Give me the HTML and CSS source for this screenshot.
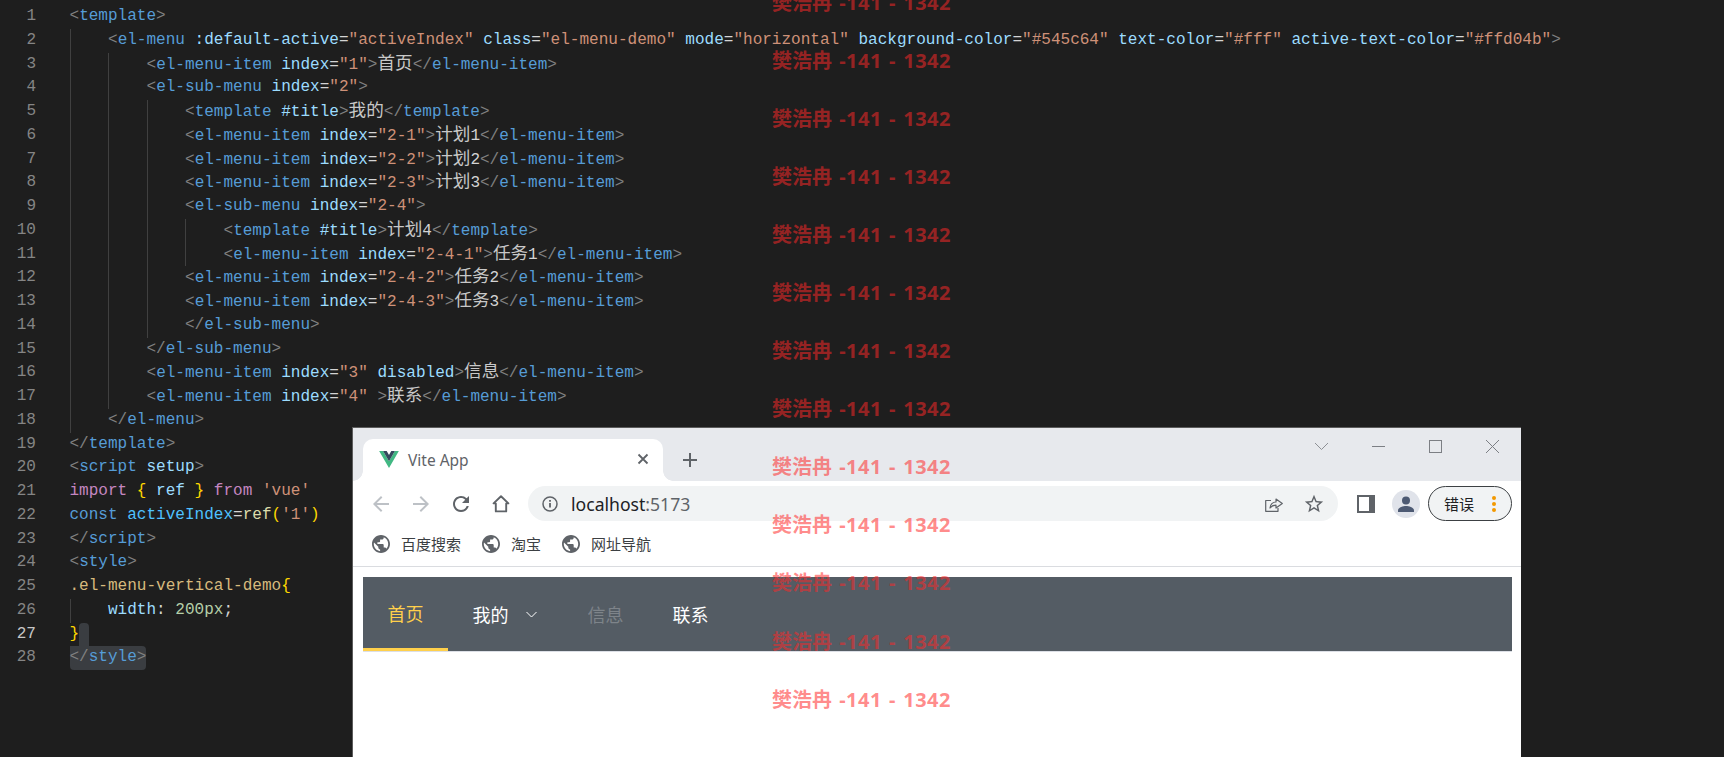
FILE: index.html
```html
<!DOCTYPE html>
<html lang="zh">
<head>
<meta charset="utf-8">
<title>Editor and Vite App</title>
<link rel="stylesheet" href="styles.css">
</head>
<body>
<main class="editor">
<div class="line"><span class="ln">1</span><span class="c"><span class="t">&lt;</span><span class="n">template</span><span class="t">&gt;</span></span></div>
<div class="line"><span class="ln">2</span><span class="g"></span><span class="c"><span class="t">&lt;</span><span class="n">el-menu</span> <span class="a">:default-active</span><span class="p">=</span><span class="s">"activeIndex"</span> <span class="a">class</span><span class="p">=</span><span class="s">"el-menu-demo"</span> <span class="a">mode</span><span class="p">=</span><span class="s">"horizontal"</span> <span class="a">background-color</span><span class="p">=</span><span class="s">"#545c64"</span> <span class="a">text-color</span><span class="p">=</span><span class="s">"#fff"</span> <span class="a">active-text-color</span><span class="p">=</span><span class="s">"#ffd04b"</span><span class="t">&gt;</span></span></div>
<div class="line"><span class="ln">3</span><span class="g"></span><span class="g"></span><span class="c"><span class="t">&lt;</span><span class="n">el-menu-item</span> <span class="a">index</span><span class="p">=</span><span class="s">"1"</span><span class="t">&gt;</span><span class="z">首页</span><span class="t">&lt;/</span><span class="n">el-menu-item</span><span class="t">&gt;</span></span></div>
<div class="line"><span class="ln">4</span><span class="g"></span><span class="g"></span><span class="c"><span class="t">&lt;</span><span class="n">el-sub-menu</span> <span class="a">index</span><span class="p">=</span><span class="s">"2"</span><span class="t">&gt;</span></span></div>
<div class="line"><span class="ln">5</span><span class="g"></span><span class="g"></span><span class="g"></span><span class="c"><span class="t">&lt;</span><span class="n">template</span> <span class="a">#title</span><span class="t">&gt;</span><span class="z">我的</span><span class="t">&lt;/</span><span class="n">template</span><span class="t">&gt;</span></span></div>
<div class="line"><span class="ln">6</span><span class="g"></span><span class="g"></span><span class="g"></span><span class="c"><span class="t">&lt;</span><span class="n">el-menu-item</span> <span class="a">index</span><span class="p">=</span><span class="s">"2-1"</span><span class="t">&gt;</span><span class="z">计划</span><span class="p">1</span><span class="t">&lt;/</span><span class="n">el-menu-item</span><span class="t">&gt;</span></span></div>
<div class="line"><span class="ln">7</span><span class="g"></span><span class="g"></span><span class="g"></span><span class="c"><span class="t">&lt;</span><span class="n">el-menu-item</span> <span class="a">index</span><span class="p">=</span><span class="s">"2-2"</span><span class="t">&gt;</span><span class="z">计划</span><span class="p">2</span><span class="t">&lt;/</span><span class="n">el-menu-item</span><span class="t">&gt;</span></span></div>
<div class="line"><span class="ln">8</span><span class="g"></span><span class="g"></span><span class="g"></span><span class="c"><span class="t">&lt;</span><span class="n">el-menu-item</span> <span class="a">index</span><span class="p">=</span><span class="s">"2-3"</span><span class="t">&gt;</span><span class="z">计划</span><span class="p">3</span><span class="t">&lt;/</span><span class="n">el-menu-item</span><span class="t">&gt;</span></span></div>
<div class="line"><span class="ln">9</span><span class="g"></span><span class="g"></span><span class="g"></span><span class="c"><span class="t">&lt;</span><span class="n">el-sub-menu</span> <span class="a">index</span><span class="p">=</span><span class="s">"2-4"</span><span class="t">&gt;</span></span></div>
<div class="line"><span class="ln">10</span><span class="g"></span><span class="g"></span><span class="g"></span><span class="g"></span><span class="c"><span class="t">&lt;</span><span class="n">template</span> <span class="a">#title</span><span class="t">&gt;</span><span class="z">计划</span><span class="p">4</span><span class="t">&lt;/</span><span class="n">template</span><span class="t">&gt;</span></span></div>
<div class="line"><span class="ln">11</span><span class="g"></span><span class="g"></span><span class="g"></span><span class="g"></span><span class="c"><span class="t">&lt;</span><span class="n">el-menu-item</span> <span class="a">index</span><span class="p">=</span><span class="s">"2-4-1"</span><span class="t">&gt;</span><span class="z">任务</span><span class="p">1</span><span class="t">&lt;/</span><span class="n">el-menu-item</span><span class="t">&gt;</span></span></div>
<div class="line"><span class="ln">12</span><span class="g"></span><span class="g"></span><span class="g"></span><span class="c"><span class="t">&lt;</span><span class="n">el-menu-item</span> <span class="a">index</span><span class="p">=</span><span class="s">"2-4-2"</span><span class="t">&gt;</span><span class="z">任务</span><span class="p">2</span><span class="t">&lt;/</span><span class="n">el-menu-item</span><span class="t">&gt;</span></span></div>
<div class="line"><span class="ln">13</span><span class="g"></span><span class="g"></span><span class="g"></span><span class="c"><span class="t">&lt;</span><span class="n">el-menu-item</span> <span class="a">index</span><span class="p">=</span><span class="s">"2-4-3"</span><span class="t">&gt;</span><span class="z">任务</span><span class="p">3</span><span class="t">&lt;/</span><span class="n">el-menu-item</span><span class="t">&gt;</span></span></div>
<div class="line"><span class="ln">14</span><span class="g"></span><span class="g"></span><span class="g"></span><span class="c"><span class="t">&lt;/</span><span class="n">el-sub-menu</span><span class="t">&gt;</span></span></div>
<div class="line"><span class="ln">15</span><span class="g"></span><span class="g"></span><span class="c"><span class="t">&lt;/</span><span class="n">el-sub-menu</span><span class="t">&gt;</span></span></div>
<div class="line"><span class="ln">16</span><span class="g"></span><span class="g"></span><span class="c"><span class="t">&lt;</span><span class="n">el-menu-item</span> <span class="a">index</span><span class="p">=</span><span class="s">"3"</span> <span class="a">disabled</span><span class="t">&gt;</span><span class="z">信息</span><span class="t">&lt;/</span><span class="n">el-menu-item</span><span class="t">&gt;</span></span></div>
<div class="line"><span class="ln">17</span><span class="g"></span><span class="g"></span><span class="c"><span class="t">&lt;</span><span class="n">el-menu-item</span> <span class="a">index</span><span class="p">=</span><span class="s">"4"</span> <span class="t">&gt;</span><span class="z">联系</span><span class="t">&lt;/</span><span class="n">el-menu-item</span><span class="t">&gt;</span></span></div>
<div class="line"><span class="ln">18</span><span class="g"></span><span class="c"><span class="t">&lt;/</span><span class="n">el-menu</span><span class="t">&gt;</span></span></div>
<div class="line"><span class="ln">19</span><span class="c"><span class="t">&lt;/</span><span class="n">template</span><span class="t">&gt;</span></span></div>
<div class="line"><span class="ln">20</span><span class="c"><span class="t">&lt;</span><span class="n">script</span> <span class="a">setup</span><span class="t">&gt;</span></span></div>
<div class="line"><span class="ln">21</span><span class="c"><span class="k">import</span> <span class="b">{</span> <span class="a">ref</span> <span class="b">}</span> <span class="k">from</span> <span class="s">'vue'</span></span></div>
<div class="line"><span class="ln">22</span><span class="c"><span class="n">const</span> <span class="v">activeIndex</span><span class="p">=</span><span class="f">ref</span><span class="b">(</span><span class="s">'1'</span><span class="b">)</span></span></div>
<div class="line"><span class="ln">23</span><span class="c"><span class="t">&lt;/</span><span class="n">script</span><span class="t">&gt;</span></span></div>
<div class="line"><span class="ln">24</span><span class="c"><span class="t">&lt;</span><span class="n">style</span><span class="t">&gt;</span></span></div>
<div class="line"><span class="ln">25</span><span class="c"><span class="y">.el-menu-vertical-demo</span><span class="b">{</span></span></div>
<div class="line"><span class="ln">26</span><span class="g"></span><span class="c"><span class="a">width</span><span class="p">:</span> <span class="m">200px</span><span class="p">;</span></span></div>
<div class="line"><span class="ln cur">27</span><span class="c"><span class="b">}</span></span><span class="sel-tail"></span></div>
<div class="line"><span class="ln">28</span><span class="c sel"><span class="t">&lt;/</span><span class="n">style</span><span class="t">&gt;</span></span></div>
</main>

<section class="win">
  <header class="titlebar">
    <div class="tab">
      <svg class="fav" viewBox="0 0 256 221" aria-hidden="true"><path fill="#41b883" d="M204.8 0H256L128 220.8 0 0h50.56L128 132.48 204.8 0z"/><path fill="#34495e" d="M50.56 0L128 133.12 204.8 0h-47.36L128 51.2 97.92 0H50.56z"/></svg>
      <span class="tab-title">Vite App</span>
      <svg class="tab-x" viewBox="0 0 12 12" aria-hidden="true"><path d="M1.500 1.500l9 9M10.500 1.500l-9 9" fill="none" stroke="#5f6368" stroke-width="1.8"/></svg>
    </div>
    <svg class="tab-plus" viewBox="0 0 16 16" aria-hidden="true"><path d="M8 1v14M1 8h14" fill="none" stroke="#5f6368" stroke-width="2"/></svg>
    <div class="winctl">
      <svg viewBox="0 0 13 13" aria-hidden="true"><path d="M0 3l6.5 6.5L13 3" fill="none" stroke="#8d9095" stroke-width="1"/></svg>
      <svg viewBox="0 0 13 13" aria-hidden="true"><path d="M0 6.5h13" fill="none" stroke="#7c7f84" stroke-width="1"/></svg>
      <svg viewBox="0 0 13 13" aria-hidden="true"><rect x=".5" y=".5" width="12" height="12" fill="none" stroke="#7c7f84" stroke-width="1"/></svg>
      <svg viewBox="0 0 13 13" aria-hidden="true"><path d="M0 0l13 13M13 0L0 13" fill="none" stroke="#7c7f84" stroke-width="1"/></svg>
    </div>
  </header>

  <div class="toolbar">
    <span class="nav"><svg viewBox="0 0 24 24" aria-hidden="true"><path class="off" d="M20 11H7.8l5.6-5.6L12 4l-8 8 8 8 1.4-1.4L7.8 13H20z"/></svg></span>
    <span class="nav"><svg viewBox="0 0 24 24" aria-hidden="true"><path class="off" d="M4 11h12.2l-5.6-5.6L12 4l8 8-8 8-1.4-1.4 5.6-5.6H4z"/></svg></span>
    <span class="nav"><svg viewBox="0 0 24 24" aria-hidden="true"><path class="on" d="M17.65 6.35A7.958 7.958 0 0 0 12 4c-4.42 0-7.99 3.58-7.99 8s3.57 8 7.99 8c3.73 0 6.84-2.55 7.73-6h-2.08A5.99 5.99 0 0 1 12 18c-3.31 0-6-2.69-6-6s2.69-6 6-6c1.66 0 3.14.69 4.22 1.78L13 11h7V4l-2.35 2.35z"/></svg></span>
    <span class="nav"><svg viewBox="0 0 24 24" aria-hidden="true"><path d="M12 4.2L4.6 11.4h2.2v8h10.4v-8h2.2z" fill="none" stroke="#5f6368" stroke-width="1.9" stroke-linejoin="round"/></svg></span>
    <div class="omni">
      <svg class="ic16" viewBox="0 0 16 16" aria-hidden="true"><circle cx="8" cy="8" r="7" fill="none" stroke="#5f6368" stroke-width="1.5"/><path d="M7.1 7h1.8v4.6H7.1zM7.1 4.1h1.8v1.7H7.1z" fill="#5f6368"/></svg>
      <span class="url">localhost<span class="port">:5173</span></span>
      <svg class="share" viewBox="0 0 18 16" aria-hidden="true"><path d="M6 4.5H.7v10.8H13V12M5 12c0-3.8 3-6 6-6V3l6.3 4.5L11 12V9.2C8.500 9.200 6.500 10 5 12z" fill="none" stroke="#5f6368" stroke-width="1.2" stroke-linejoin="round"/></svg>
      <svg class="star" viewBox="0 0 24 24" aria-hidden="true"><path fill="#5f6368" d="M22 9.24l-7.19-.62L12 2 9.19 8.63 2 9.24l5.46 4.73L5.82 21 12 17.27 18.18 21l-1.630-7.03L22 9.24zM12 15.4l-3.76 2.27 1-4.28-3.32-2.88 4.380-.38L12 6.100l1.710 4.040 4.380.38-3.320 2.880 1 4.280L12 15.400z"/></svg>
    </div>
    <svg class="side" viewBox="0 0 18 18" aria-hidden="true"><rect width="18" height="18" fill="#5f6368"/><rect x="2" y="2" width="10" height="14" fill="#fff"/></svg>
    <svg class="avatar" viewBox="0 0 28 28" aria-hidden="true"><circle cx="14" cy="14" r="14" fill="#e0e3ea"/><circle cx="14" cy="10.500" r="4" fill="#4d5a73"/><path d="M6 20.500c0-3 5-4.500 8-4.500s8 1.500 8 4.500V22H6z" fill="#4d5a73"/></svg>
    <div class="pill"><span>错误</span><svg viewBox="0 0 4 16" aria-hidden="true"><circle cx="2" cy="2" r="2"/><circle cx="2" cy="8" r="2"/><circle cx="2" cy="14" r="2"/></svg></div>
  </div>

  <nav class="bookmarks">
    <a class="bm"><svg viewBox="2 2 20 20" aria-hidden="true"><path class="globe" d="M12 2C6.480 2 2 6.480 2 12s4.480 10 10 10 10-4.480 10-10S17.520 2 12 2zm-1 17.930c-3.950-.49-7-3.850-7-7.930 0-.62.08-1.210.21-1.790L9 15v1c0 1.100.9 2 2 2v1.930zm6.900-2.540c-.26-.81-1-1.390-1.900-1.390h-1v-3c0-.55-.45-1-1-1H8v-2h2c.55 0 1-.45 1-1V7h2c1.100 0 2-.9 2-2v-.41c2.930 1.190 5 4.060 5 7.410 0 2.080-.8 3.970-2.100 5.390z"/></svg>百度搜索</a>
    <a class="bm"><svg viewBox="2 2 20 20" aria-hidden="true"><path class="globe" d="M12 2C6.480 2 2 6.480 2 12s4.480 10 10 10 10-4.480 10-10S17.520 2 12 2zm-1 17.930c-3.950-.49-7-3.850-7-7.930 0-.62.08-1.210.21-1.790L9 15v1c0 1.100.9 2 2 2v1.930zm6.900-2.540c-.26-.81-1-1.390-1.900-1.390h-1v-3c0-.55-.45-1-1-1H8v-2h2c.55 0 1-.45 1-1V7h2c1.100 0 2-.9 2-2v-.41c2.930 1.190 5 4.060 5 7.410 0 2.080-.8 3.970-2.100 5.390z"/></svg>淘宝</a>
    <a class="bm"><svg viewBox="2 2 20 20" aria-hidden="true"><path class="globe" d="M12 2C6.480 2 2 6.480 2 12s4.480 10 10 10 10-4.480 10-10S17.520 2 12 2zm-1 17.930c-3.950-.49-7-3.850-7-7.930 0-.62.08-1.210.21-1.790L9 15v1c0 1.100.9 2 2 2v1.930zm6.900-2.540c-.26-.81-1-1.390-1.900-1.390h-1v-3c0-.55-.45-1-1-1H8v-2h2c.55 0 1-.45 1-1V7h2c1.100 0 2-.9 2-2v-.41c2.930 1.190 5 4.060 5 7.410 0 2.080-.8 3.970-2.100 5.390z"/></svg>网址导航</a>
  </nav>

  <div class="page">
    <ul class="menu">
      <li class="item active">首页</li>
      <li class="item sub">我的<svg viewBox="0 0 11 7" aria-hidden="true"><path d="M.5 1l5 5 5-5" fill="none" stroke="#fff" stroke-width="1"/></svg></li>
      <li class="item disabled">信息</li>
      <li class="item">联系</li>
    </ul>
  </div>
</section>

<div class="watermarks">
  <div class="wm">樊浩冉<span> -141 - 1342</span></div>
  <div class="wm">樊浩冉<span> -141 - 1342</span></div>
  <div class="wm">樊浩冉<span> -141 - 1342</span></div>
  <div class="wm">樊浩冉<span> -141 - 1342</span></div>
  <div class="wm">樊浩冉<span> -141 - 1342</span></div>
  <div class="wm">樊浩冉<span> -141 - 1342</span></div>
  <div class="wm">樊浩冉<span> -141 - 1342</span></div>
  <div class="wm">樊浩冉<span> -141 - 1342</span></div>
  <div class="wm">樊浩冉<span> -141 - 1342</span></div>
  <div class="wm">樊浩冉<span> -141 - 1342</span></div>
  <div class="wm">樊浩冉<span> -141 - 1342</span></div>
  <div class="wm">樊浩冉<span> -141 - 1342</span></div>
  <div class="wm">樊浩冉<span> -141 - 1342</span></div>
</div>
</body>
</html>
```

FILE: styles.css
```css
* { box-sizing: border-box; }
html, body { margin: 0; padding: 0; }
body {
  position: relative;
  width: 1724px;
  height: 757px;
  overflow: hidden;
  background: #1e1e1e;
  font-family: "Noto Sans", "Noto Sans CJK SC", sans-serif;
}

/* Editor */
.editor {
  padding-top: 5px;
  font-family: "Liberation Mono", "Noto Sans CJK SC", monospace;
  font-size: 16.04px;
  line-height: 23.75px;
  color: #d4d4d4;
}
.line { display: flex; height: 23.75px; }
.ln {
  flex: none;
  width: 36px;
  margin-right: 33.5px;
  text-align: right;
  color: #858585;
}
.ln.cur { color: #c6c6c6; }
.g {
  flex: none;
  width: 38.5px;
  border-left: 1px solid #404040;
}
.c { white-space: pre; }
.t { color: #808080; }
.n { color: #569cd6; }
.a { color: #9cdcfe; }
.s { color: #ce9178; }
.p { color: #d4d4d4; }
.k { color: #c586c0; }
.b { color: #ffd700; }
.v { color: #4fc1ff; }
.f { color: #dcdcaa; }
.y { color: #d7ba7d; }
.m { color: #b5cea8; }
.z { font-family: "Noto Sans CJK SC", sans-serif; font-size: 17.6px; line-height: 1; color: #c8c8c8; }
.sel { background: #3a3d41; border-radius: 0 4px 4px 4px; }
.sel-tail { width: 10px; background: #3a3d41; border-radius: 4px 4px 0 0; }

/* Browser window */
.win {
  position: absolute;
  left: 352px;
  top: 427px;
  right: 203px;
  bottom: 0;
  background: #fff;
  border: 1px solid #5c5c5c;
  border-bottom: 0;
  border-right: 0;
  display: flex;
  flex-direction: column;
}
.titlebar {
  flex: none;
  height: 53px;
  background: #e7e9ed;
  display: flex;
  align-items: flex-end;
}
.tab {
  position: relative;
  flex: none;
  width: 300px;
  height: 42px;
  margin-left: 10px;
  background: #fff;
  border-radius: 10px 10px 0 0;
  display: flex;
  align-items: center;
  padding: 0 0 2px 16px;
}
.tab::before, .tab::after {
  content: "";
  position: absolute;
  bottom: 0;
  width: 10px;
  height: 10px;
}
.tab::before { left: -10px; background: radial-gradient(circle at 0 0, transparent 9.5px, #fff 10px); }
.tab::after { right: -10px; background: radial-gradient(circle at 100% 0, transparent 9.5px, #fff 10px); }
.fav { width: 20px; height: 17px; flex: none; }
.tab-title { margin: 1px 0 0 9px; font-size: 15.5px; color: #5f6368; }
.tab-x { width: 12px; height: 12px; margin-left: auto; margin-right: 14px; flex: none; }
.tab-plus { width: 16px; height: 16px; flex: none; align-self: flex-start; margin: 24px 0 0 19px; }
.winctl {
  margin-left: auto;
  margin-right: 22px;
  align-self: flex-start;
  padding-top: 12px;
  display: flex;
  gap: 44px;
}
.winctl svg { width: 13px; height: 13px; display: block; }

.toolbar {
  flex: none;
  height: 41px;
  padding: 5px 0 1px 8px;
  display: flex;
  align-items: center;
}
.nav {
  flex: none;
  width: 40px;
  display: flex;
  justify-content: center;
}
.nav svg { width: 24px; height: 24px; display: block; }
.off { fill: #bdc1c6; }
.on { fill: #5f6368; }
.omni {
  flex: none;
  width: 810px;
  height: 35px;
  margin-left: 7px;
  padding: 0 13px 0 14px;
  border-radius: 18px;
  background: #f1f3f4;
  display: flex;
  align-items: center;
}
.ic16 { width: 16px; height: 16px; flex: none; }
.url { margin-left: 13px; font-size: 17.6px; color: #202124; }
.port { color: #5f6368; }
.share { width: 18px; height: 16px; margin-left: auto; flex: none; }
.star { width: 22px; height: 22px; margin-left: 20px; flex: none; }
.side { width: 18px; height: 18px; margin-left: 18.500px; flex: none; }
.avatar { width: 28px; height: 28px; margin-left: 17.500px; flex: none; }
.pill {
  flex: none;
  width: 84px;
  height: 35px;
  margin-left: 8px;
  padding-left: 15px;
  border: 1.500px solid #3c4043;
  border-radius: 18px;
  background: #f1f3f4;
  display: flex;
  align-items: center;
  font-size: 15px;
  color: #202124;
}
.pill svg { width: 4px; height: 16px; margin-left: 18px; fill: #f29900; }

.bookmarks {
  flex: none;
  height: 45px;
  padding-left: 19px;
  padding-bottom: 1px;
  border-bottom: 1px solid #dadce0;
  display: flex;
  align-items: center;
  font-size: 15px;
  color: #3c4043;
}
.bm { display: flex; align-items: center; margin-right: 21px; }
.bm svg { width: 18px; height: 18px; margin-right: 11px; flex: none; }
.globe { fill: #5f6368; }

.page { padding: 10px 9px 0 10px; }
.menu {
  list-style: none;
  margin: 0;
  padding: 0;
  height: 75px;
  background: #545c64;
  border-bottom: 1px solid #dcdfe6;
  display: flex;
  font-size: 18px;
  color: #fff;
}
.item {
  height: 74px;
  padding: 0 24.500px;
  display: flex;
  align-items: center;
}
.item.active { color: #ffd04b; border-bottom: 3px solid #ffd04b; padding-top: 1px; }
.item.disabled { color: rgba(255,255,255,.25); }
.item.sub svg { width: 11px; height: 7px; margin-left: 17px; margin-right: 2px; }

/* Watermark overlay */
.watermarks {
  position: absolute;
  left: 772px;
  top: -26px;
  pointer-events: none;
  display: flex;
  flex-direction: column;
}
.wm {
  height: 58.050px;
  line-height: 58px;
  white-space: pre;
  font-size: 20px;
  font-weight: 700;
  color: rgba(255, 40, 40, .55);
}
.wm span { letter-spacing: .5px; word-spacing: 1.5px; }
```
